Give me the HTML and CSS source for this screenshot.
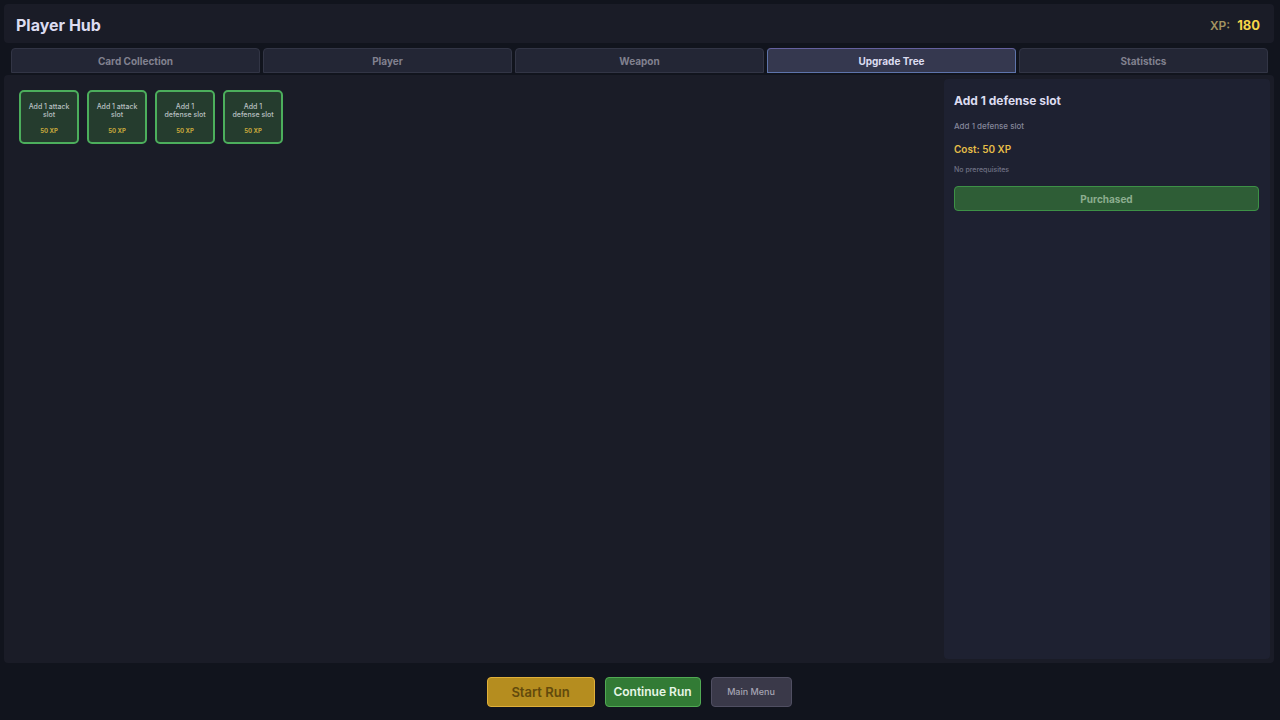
FILE: index.html
```
<!DOCTYPE html>
<html lang="en">
<head>
  <meta charset="UTF-8" />
  <meta name="viewport" content="width=device-width, initial-scale=1.0" />
  <title>Player Hub</title>
  <link rel="stylesheet" href="styles.css">
</head>
<body>

  <header class="hub-header">
    <h1>Player Hub</h1>
    <div class="xp"><span class="xp-label">XP:</span> <span class="xp-value">180</span></div>
  </header>

  <nav class="tabs" role="tablist">
    <button class="tab" role="tab">Card Collection</button>
    <button class="tab" role="tab">Player</button>
    <button class="tab" role="tab">Weapon</button>
    <button class="tab active" role="tab" aria-selected="true">Upgrade Tree</button>
    <button class="tab" role="tab">Statistics</button>
  </nav>

  <main class="hub-content">
    <section class="upgrade-tree">
      <button class="upgrade">
        <span class="upgrade-name">Add 1 attack slot</span>
        <span class="upgrade-cost">50 XP</span>
      </button>
      <button class="upgrade">
        <span class="upgrade-name">Add 1 attack slot</span>
        <span class="upgrade-cost">50 XP</span>
      </button>
      <button class="upgrade">
        <span class="upgrade-name">Add 1 defense slot</span>
        <span class="upgrade-cost">50 XP</span>
      </button>
      <button class="upgrade">
        <span class="upgrade-name">Add 1 defense slot</span>
        <span class="upgrade-cost">50 XP</span>
      </button>
    </section>

    <aside class="details">
      <h2>Add 1 defense slot</h2>
      <p class="details-text">Add 1 defense slot</p>
      <p class="details-cost">Cost: 50 XP</p>
      <p class="details-prereq">No prerequisites</p>
      <button class="buy-btn" disabled>Purchased</button>
    </aside>
  </main>

  <footer class="hub-footer">
    <button class="btn btn-start">Start Run</button>
    <button class="btn btn-continue">Continue Run</button>
    <button class="btn btn-menu">Main Menu</button>
  </footer>

</body>
</html>
```
FILE: styles.css
```
* {
  box-sizing: border-box;
}

body {
  margin: 0;
  padding: 4px 6px 0 4px;
  min-height: 100vh;
  display: flex;
  flex-direction: column;
  background: #11141d;
  color: #dcdcf0;
  font-family: Inter, "Liberation Sans", sans-serif;
}

h1, h2, p {
  margin: 0;
}

button {
  font-family: inherit;
  padding: 0;
  cursor: pointer;
}

/* Header */
.hub-header {
  display: flex;
  justify-content: space-between;
  align-items: center;
  height: 39px;
  padding: 2px 14px 0 12px;
  background: #1a1c27;
  border-radius: 4px;
}

.hub-header h1 {
  font-size: 16px;
  font-weight: 700;
}

.xp {
  display: flex;
  align-items: baseline;
  gap: 7px;
}

.xp-label {
  font-size: 12px;
  font-weight: 600;
  color: #a49461;
}

.xp-value {
  font-size: 13px;
  font-weight: 700;
  color: #f7d548;
}

/* Tabs */
.tabs {
  display: flex;
  gap: 3px;
  margin: 5px 6px 2px 7px;
}

.tab {
  flex: 1;
  height: 25px;
  border: 1px solid #323545;
  border-radius: 4px 4px 0 0;
  background: #232635;
  color: #81818f;
  font-size: 10px;
  font-weight: 700;
}

.tab.active {
  background: #35384f;
  border-color: #5e74ab;
  border-top-color: #65619f;
  color: #dcdcf0;
}

/* Content */
.hub-content {
  flex: 1;
  display: flex;
  padding: 4px;
  background: #1a1c27;
  border-radius: 4px;
}

.upgrade-tree {
  flex: 1;
  display: flex;
  flex-wrap: wrap;
  align-content: flex-start;
  gap: 8px;
  padding: 11px;
}

.upgrade {
  display: flex;
  flex-direction: column;
  align-items: center;
  width: 60px;
  height: 54px;
  padding: 11px 6px 0;
  border: 2px solid #4cae5c;
  border-radius: 5px;
  background: #253c2e;
}

.upgrade-name {
  height: 24px;
  font-size: 7px;
  line-height: 8px;
  font-weight: 500;
  color: #b9c0c2;
}

.upgrade-cost {
  font-size: 6px;
  line-height: 8px;
  font-weight: 700;
  color: #c7a83c;
}

.details {
  flex: 0 0 326px;
  padding: 14px 11px 14px 10px;
  background: #1e2131;
  border-radius: 4px;
}

.details h2 {
  font-size: 12px;
  line-height: 16px;
  font-weight: 700;
}

.details-text {
  margin-top: 11px;
  font-size: 8px;
  line-height: 12px;
  font-weight: 500;
  color: #85879a;
}

.details-cost {
  margin-top: 10px;
  font-size: 10px;
  line-height: 14px;
  font-weight: 600;
  color: #e5bd48;
}

.details-prereq {
  margin-top: 8px;
  font-size: 7px;
  line-height: 12px;
  font-weight: 500;
  color: #707285;
}

.buy-btn {
  width: 100%;
  height: 25px;
  margin-top: 10px;
  border: 1px solid #3d9146;
  border-radius: 4px;
  background: #2e5d36;
  color: #8cad8f;
  font-size: 10px;
  font-weight: 700;
}

/* Footer */
.hub-footer {
  display: flex;
  justify-content: center;
  align-items: center;
  gap: 10px;
  height: 57px;
}

.btn {
  height: 30px;
  border: 1px solid;
  border-radius: 4px;
}

.btn-start {
  width: 108px;
  background: #b58d1f;
  border-color: #e0b03a;
  color: #624a0c;
  font-size: 13px;
  font-weight: 600;
}

.btn-continue {
  width: 96px;
  background: #327b35;
  border-color: #51aa54;
  color: #e6f6e6;
  font-size: 12px;
  font-weight: 600;
}

.btn-menu {
  width: 81px;
  background: #3a3949;
  border-color: #504f62;
  color: #a5a4b3;
  font-size: 9px;
  font-weight: 500;
}
```
